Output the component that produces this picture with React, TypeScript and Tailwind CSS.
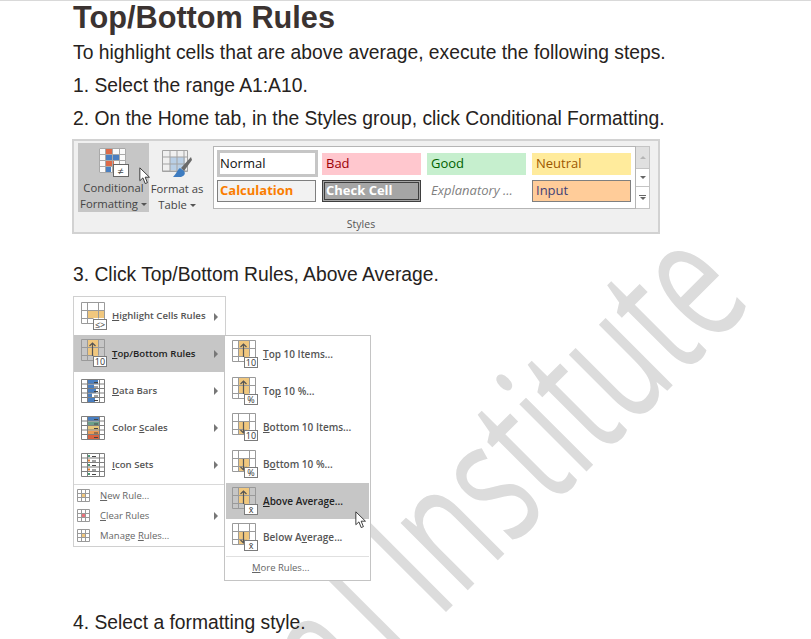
import React from "react";

function Arrow({ className }: { className: string }) {
  return (
    <svg className={className} viewBox="0 0 14 21">
      <path d="M1 1v15l3.600-3.300 2.600 6.600 2.600-1-2.600-6.400h5z" fill="#fff" stroke="#222" strokeWidth="1" />
    </svg>
  );
}

function Grid({ fill, arrow, badge }: { fill: "top" | "bottom" | "mid" | "none"; arrow?: "up" | "down"; badge: string }) {
  return (
    <div className="relative w-[25px] h-[29px] shrink-0">
      <svg className="absolute left-0 top-0" width="24" height="23" viewBox="0 0 24 23">
        {fill === "top" && <rect x="6" y="1" width="11" height="16" fill="#f0c77e" />}
        {fill === "bottom" && <rect x="6" y="8" width="11" height="14" fill="#f0c77e" />}
        {fill === "mid" && <rect x="6" y="8" width="17" height="8" fill="#f0c77e" />}
        <path d="M.5.500h23v16.500M.5.500v21h12M.5 8.500h23M.5 16.500h12M6.500.500v21M17.500.500v16" fill="none" stroke="#9a9a9a" strokeWidth="1" />
        {arrow === "up" && <path d="M11.500 17V4M8.500 7l3-3 3 3" fill="none" stroke="#555" strokeWidth="1.200" />}
        {arrow === "down" && <path d="M11.500 9v11M8.500 17l3 3 3-3" fill="none" stroke="#555" strokeWidth="1.200" />}
      </svg>
      <div className="absolute right-[-1px] bottom-[1px] w-[14px] h-[11px] border border-[#7b7b7b] bg-white flex items-center justify-center text-[9px] leading-none text-[#333] font-['Open_Sans',sans-serif]">
        {badge}
      </div>
    </div>
  );
}

const bars = [11, 7, 9, 5, 8];
const scale = ["#4a7fc1", "#6ca08a", "#e7c77a", "#ea9a55", "#d9623f"];

function RowsIcon({ kind }: { kind: "bars" | "scale" | "icons" }) {
  return (
    <svg width="24" height="24" viewBox="0 0 24 24" className="shrink-0">
      {[0, 1, 2, 3, 4].map((i) => (
        <g key={i}>
          {kind === "bars" && <rect x="6" y={1 + i * 4.5} width={bars[i]} height="4" fill="#4a7fc1" />}
          {kind === "scale" && <rect x="6" y={1 + i * 4.5} width="12" height="4" fill={scale[i]} />}
          {kind === "icons" && <rect x="7" y={2 + i * 4.5} width="2" height="2" fill={i % 2 ? "#e8802c" : "#4d9a78"} />}
          <rect x={kind === "icons" ? 11 : 13} y={3 + i * 4.5} width="4" height="1" fill="#444" />
        </g>
      ))}
      <path d="M.5.500h23v23H.5zM6.500.500v23M18.500.500v23M.5 5h23M.5 9.500h23M.5 14h23M.5 18.500h23" fill="none" stroke="#7f7f7f" strokeWidth="1" />
    </svg>
  );
}

function MainRow({ icon, children, active }: { icon: React.ReactNode; children: React.ReactNode; active?: boolean }) {
  return (
    <div className={`h-[37.200px] flex items-center px-[7px] ${active ? "bg-[#c6c6c6]" : ""}`}>
      <div className="w-[31px] flex items-center">{icon}</div>
      <span className={`text-[9.600px] font-semibold flex-1 whitespace-nowrap ${active ? "text-[#222]" : "text-[#555]"}`}>{children}</span>
      <span className="w-0 h-0 border-y-[4px] border-y-transparent border-l-[4px] border-l-[#777]" />
    </div>
  );
}

function SmallRow({ children, arrow, color }: { children: React.ReactNode; arrow?: boolean; color: string }) {
  return (
    <div className="h-[20px] flex items-center pl-[3px] pr-[7px]">
      <svg width="13" height="13" viewBox="0 0 13 13" className="shrink-0 mr-[10px]">
        <rect x="4" y="4" width="5" height="5" fill={color} />
        <path d="M.5.500h12v12H.5zM.5 4.500h12M.5 8.500h12M4.500.500v12M8.500.500v12" fill="none" stroke="#999" strokeWidth="1" />
      </svg>
      <span className="text-[9.500px] flex-1 text-[#666]">{children}</span>
      {arrow && <span className="w-0 h-0 border-y-[4px] border-y-transparent border-l-[4px] border-l-[#777]" />}
    </div>
  );
}

function SubRow({ fill, arrow, badge, children, active }: { fill: "top" | "bottom"; arrow: "up" | "down"; badge: string; children: React.ReactNode; active?: boolean }) {
  return (
    <div className={`h-[36.700px] flex items-center pl-[6px] ${active ? "bg-[#c6c6c6] text-[#222]" : "text-[#555]"}`}>
      <div className="w-[31px]">
        <Grid fill={fill} arrow={arrow} badge={badge} />
      </div>
      <span className="text-[10px] font-semibold">{children}</span>
    </div>
  );
}

function StyleCell({ className, children }: { className: string; children: React.ReactNode }) {
  return <div className={`w-[99px] h-[22px] flex items-center text-[13px] ${className}`}>{children}</div>;
}

export default function App() {
  return (
    <div className="relative h-[639px] w-[811px] overflow-hidden bg-white border-t border-[#d9d9d9] pl-[73px] font-['Liberation_Sans',Arial,sans-serif] text-[19.300px] text-[#262220]">
      {/* watermark */}
      <div className="absolute left-[339px] top-[615px] origin-[0px_103px] -rotate-45 scale-y-[1.530] text-[116px] leading-none text-[#dcdcdc] font-['Open_Sans',sans-serif] font-medium whitespace-nowrap">
        <span className="tracking-[16px]">a</span>l Institute
      </div>

      <div className="relative">
        <h1 className="h-[35px] text-[30.700px] leading-[34px] font-bold text-[#3b3331]">Top/Bottom Rules</h1>
        <p className="h-[33px] leading-[33px]">To highlight cells that are above average, execute the following steps.</p>
        <p className="h-[33px] leading-[33px]">1. Select the range A1:A10.</p>
        <p className="h-[33px] leading-[33px]">2. On the Home tab, in the Styles group, click Conditional Formatting.</p>

        {/* ribbon */}
        <div className="relative mt-[4px] ml-[-1px] w-[588px] h-[95px] bg-[#f0f0f0] border-2 border-[#d2d2d2] font-['Open_Sans',sans-serif] text-[#444]">
          <div className="flex pl-[4px] pt-[2px] h-[73px]">
            <div className="w-[71px] h-[69px] bg-[#c6c6c6] flex flex-col items-center pt-[5px]">
              <div className="relative w-[30px] h-[33px]">
                <svg width="27" height="25" viewBox="0 0 27 25" className="absolute left-0 top-0">
                  <rect x="0" y="0" width="27" height="25" fill="#fafafa" />
                  <rect x="7" y="1" width="6" height="5" fill="#dd6a48" />
                  <rect x="7" y="7" width="13" height="5" fill="#4a7fc1" />
                  <rect x="7" y="13" width="8" height="5" fill="#dd6a48" />
                  <rect x="7" y="19" width="5" height="5" fill="#4a7fc1" />
                  <path d="M.5.500h26v24H.5zM.5 6.500h26M.5 12.500h26M.5 18.500h26M6.500.500v24M13.500.500v24M20.500.500v24" fill="none" stroke="#a9a9a9" strokeWidth="1" />
                </svg>
                <div className="absolute right-0 bottom-[3px] w-[16px] h-[13px] bg-white border border-[#666] flex items-center justify-center text-[11px] leading-none">≠</div>
              </div>
              <div className="text-[11.300px] leading-[16px] text-center whitespace-nowrap">
                Conditional
                <br />
                Formatting <span className="inline-block align-middle w-0 h-0 border-x-[3px] border-x-transparent border-t-[3px] border-t-[#555]" />
              </div>
            </div>
            <div className="w-[54px] ml-[1px] flex flex-col items-center pt-[7px]">
              <svg width="32" height="31" viewBox="0 0 32 31">
                <rect x="9" y="7" width="15" height="13" fill="#b9cfe6" />
                <path d="M1.500.500h25v21h-25zM1.500 7h25M1.500 14h25M1.500 21h25M9 .500v21M16 .500v21M23 .500v21" fill="none" stroke="#a3a3a3" strokeWidth="1" />
                <path d="M30 7L20 18l3 3L31 10z" fill="#6b6b6b" />
                <path d="M19 18c-3 2-3 5-7 9h8c3-1 5-3 3-6z" fill="#3e7cc0" />
              </svg>
              <div className="text-[11.300px] leading-[16px] text-center whitespace-nowrap">
                Format as
                <br />
                Table <span className="inline-block align-middle w-0 h-0 border-x-[3px] border-x-transparent border-t-[3px] border-t-[#555]" />
              </div>
            </div>
            <div className="ml-[9px] mt-[3px] flex h-[63px] self-start">
              <div className="w-[423px] border border-[#b5b5b5] bg-white pl-[3px] pt-[3px]">
                <div className="flex items-center h-[27px]">
                  <div className="w-[101px] h-[27px] border-[3px] border-[#c6c6c6] flex items-center text-[13px] text-[#111]">Normal</div>
                  <StyleCell className="ml-[4px] pl-[4px] bg-[#ffc7ce] text-[#9c0006]">Bad</StyleCell>
                  <StyleCell className="ml-[6px] pl-[4px] bg-[#c6efce] text-[#006100]">Good</StyleCell>
                  <StyleCell className="ml-[6px] pl-[4px] bg-[#ffeb9c] text-[#9c5700]">Neutral</StyleCell>
                </div>
                <div className="flex items-center mt-[3px]">
                  <StyleCell className="pl-[2px] bg-[#f2f2f2] border border-[#7f7f7f] text-[#fa7d00] font-bold">Calculation</StyleCell>
                  <StyleCell className="ml-[6px] pl-[1px] bg-[#a5a5a5] border-[3px] border-double border-[#3f3f3f] text-white font-bold whitespace-nowrap">Check Cell</StyleCell>
                  <StyleCell className="ml-[6px] pl-[4px] text-[#7f7f7f] italic whitespace-nowrap">Explanatory ...</StyleCell>
                  <StyleCell className="ml-[6px] pl-[3px] bg-[#ffcc99] border border-[#7f7f7f] text-[#3f3f76]">Input</StyleCell>
                </div>
              </div>
              <div className="w-[14px] border-y border-r border-[#c4c4c4] flex flex-col">
                <div className="h-[21px] bg-[#e0e0e0] flex items-center justify-center">
                  <span className="w-0 h-0 border-x-[3px] border-x-transparent border-b-[3px] border-b-[#b5b5b5]" />
                </div>
                <div className="h-[19px] bg-white border-y border-[#c4c4c4] flex items-center justify-center">
                  <span className="w-0 h-0 border-x-[3px] border-x-transparent border-t-[3px] border-t-[#666]" />
                </div>
                <div className="flex-1 bg-white flex flex-col items-center justify-center gap-[1px]">
                  <span className="w-[7px] h-[1px] bg-[#666]" />
                  <span className="w-0 h-0 border-x-[3px] border-x-transparent border-t-[3px] border-t-[#666]" />
                </div>
              </div>
            </div>
          </div>
          <div className="text-center text-[10.500px] leading-[14px] pt-[3px] text-[#555] mr-[10px]">Styles</div>
          <Arrow className="absolute left-[65px] top-[26px] w-[12px] h-[18px]" />
        </div>

        <p className="h-[33px] mt-[24px] leading-[33px]">3. Click Top/Bottom Rules, Above Average.</p>

        {/* menus */}
        <div className="flex items-start mt-[5px] font-['Open_Sans',sans-serif]">
          <div className="w-[153px] h-[251px] bg-white border border-[#d0d0d0] pt-[1px]">
            <MainRow icon={<Grid fill="mid" badge="≤>" />}><u>H</u>ighlight Cells Rules</MainRow>
            <MainRow active icon={<Grid fill="top" arrow="up" badge="10" />}><u>T</u>op/Bottom Rules</MainRow>
            <MainRow icon={<RowsIcon kind="bars" />}><u>D</u>ata Bars</MainRow>
            <MainRow icon={<RowsIcon kind="scale" />}>Color <u>S</u>cales</MainRow>
            <MainRow icon={<RowsIcon kind="icons" />}><u>I</u>con Sets</MainRow>
            <div className="h-[1px] bg-[#d9d9d9] mb-[1px]" />
            <SmallRow color="#f0c77e"><u>N</u>ew Rule...</SmallRow>
            <SmallRow color="#e9737c" arrow><u>C</u>lear Rules</SmallRow>
            <SmallRow color="#f0c77e">Manage <u>R</u>ules...</SmallRow>
          </div>
          <div className="relative w-[147px] h-[246px] mt-[39px] ml-[-2px] bg-white border border-[#c4c4c4] px-[1px]">
            <SubRow fill="top" arrow="up" badge="10"><u>T</u>op 10 Items...</SubRow>
            <SubRow fill="top" arrow="up" badge="%">To<u>p</u> 10 %...</SubRow>
            <SubRow fill="bottom" arrow="down" badge="10"><u>B</u>ottom 10 Items...</SubRow>
            <SubRow fill="bottom" arrow="down" badge="%">B<u>o</u>ttom 10 %...</SubRow>
            <SubRow active fill="top" arrow="up" badge="x̄"><u>A</u>bove Average...</SubRow>
            <SubRow fill="bottom" arrow="down" badge="x̄">Below A<u>v</u>erage...</SubRow>
            <div className="h-[1px] bg-[#e0e0e0]" />
            <div className="h-[21px] flex items-center pl-[26px] text-[9.500px] text-[#666]"><span><u>M</u>ore Rules...</span></div>
          </div>
          <Arrow className="relative ml-[-16px] mt-[215px] w-[12px] h-[18px]" />
        </div>

        <p className="h-[33px] mt-[25px] leading-[33px]">4. Select a formatting style.</p>
      </div>
    </div>
  );
}
